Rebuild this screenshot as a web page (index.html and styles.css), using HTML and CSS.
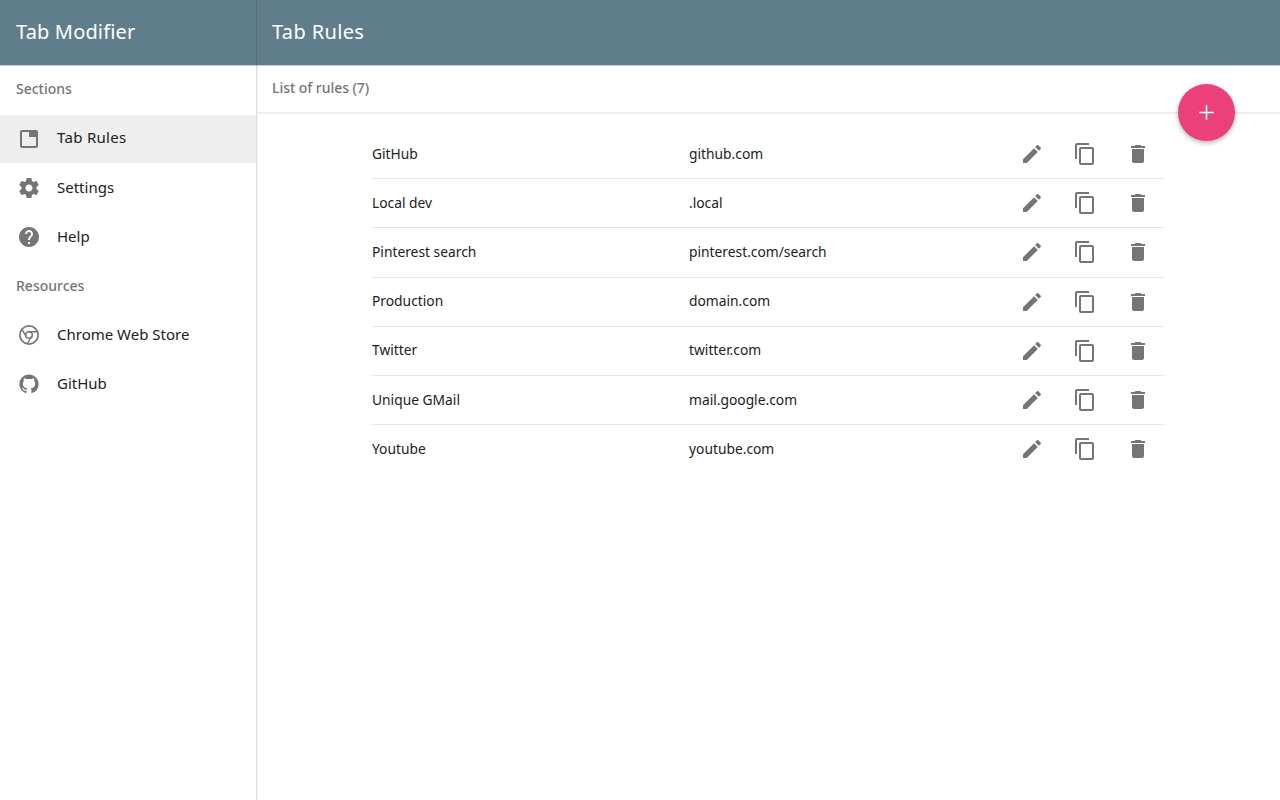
FILE: index.html
```html
<!DOCTYPE html>
<html lang="en">
<head>
  <meta charset="UTF-8" />
  <title>Tab Modifier</title>
  <link rel="stylesheet" href="styles.css">
</head>
<body>
  <aside class="sidenav">
    <div class="brand">Tab Modifier</div>
    <div class="nav-heading first">Sections</div>
    <a class="nav-item active">
      <svg class="nav-icon" viewBox="0 0 24 24"><path d="M19 3H5c-1.100 0-2 .9-2 2v14c0 1.100.9 2 2 2h14c1.100 0 2-.9 2-2V5c0-1.100-.9-2-2-2zm0 16H5V5h7v5h7v9z"/></svg>
      <span class="nav-label">Tab Rules</span>
    </a>
    <a class="nav-item">
      <svg class="nav-icon" viewBox="0 0 24 24"><path d="M19.43 12.98c.04-.32.07-.64.07-.98s-.03-.66-.07-.98l2.110-1.650c.19-.15.240-.42.120-.64l-2-3.460c-.12-.22-.39-.3-.61-.22l-2.490 1c-.52-.4-1.080-.73-1.690-.98l-.38-2.650C14.460 2.180 14.250 2 14 2h-4c-.25 0-.46.18-.49.420l-.38 2.650c-.61.25-1.170.59-1.690.98l-2.490-1c-.23-.09-.49 0-.61.22l-2 3.460c-.13.22-.07.49.12.64l2.110 1.650c-.04.32-.07.650-.07.98s.03.66.07.98l-2.110 1.650c-.19.15-.24.42-.12.64l2 3.460c.12.22.39.3.61.22l2.490-1c.52.4 1.080.73 1.690.98l.38 2.650c.03.24.24.42.49.42h4c.25 0 .46-.18.49-.42l.38-2.650c.61-.25 1.170-.59 1.690-.98l2.490 1c.23.09.49 0 .61-.22l2-3.460c.12-.22.07-.49-.12-.64l-2.110-1.650zM12 15.500c-1.930 0-3.500-1.570-3.500-3.500s1.570-3.500 3.500-3.500 3.500 1.570 3.500 3.500-1.570 3.500-3.500 3.500z"/></svg>
      <span class="nav-label">Settings</span>
    </a>
    <a class="nav-item">
      <svg class="nav-icon" viewBox="0 0 24 24"><path d="M12 2C6.480 2 2 6.480 2 12s4.480 10 10 10 10-4.480 10-10S17.520 2 12 2zm1 17h-2v-2h2v2zm2.070-7.750l-.9.920C13.450 12.900 13 13.500 13 15h-2v-.5c0-1.100.45-2.100 1.170-2.830l1.240-1.260c.37-.36.59-.86.59-1.410 0-1.100-.9-2-2-2s-2 .9-2 2H8c0-2.210 1.790-4 4-4s4 1.790 4 4c0 .88-.36 1.680-.93 2.250z"/></svg>
      <span class="nav-label">Help</span>
    </a>
    <div class="nav-heading">Resources</div>
    <a class="nav-item">
      <svg class="nav-icon" viewBox="0 0 24 24"><path fill-rule="evenodd" d="M12 2a10 10 0 1 0 0 20 10 10 0 0 0 0-20zm0 1.700a8.300 8.300 0 1 1 0 16.600 8.300 8.300 0 0 1 0-16.600z"/><path fill-rule="evenodd" d="M12 8a4 4 0 1 0 0 8 4 4 0 0 0 0-8zm0 1.400a2.600 2.600 0 1 1 0 5.200 2.600 2.600 0 0 1 0-5.200z"/><path d="M12 8h8.500v1.400H12zM8.600 14l-4.200-7.300 1.200-.7 4.200 7.300zM15.400 13.300l-4.200 7.300-1.200-.7 4.200-7.300z"/></svg>
      <span class="nav-label">Chrome Web Store</span>
    </a>
    <a class="nav-item">
      <svg class="nav-icon" viewBox="-2 -2 20 20"><path d="M8 0C3.580 0 0 3.580 0 8c0 3.540 2.290 6.530 5.470 7.590.4.070.55-.17.55-.38 0-.19-.01-.82-.01-1.490-2.010.37-2.530-.49-2.690-.94-.09-.23-.48-.94-.82-1.130-.28-.15-.68-.52-.01-.53.63-.01 1.080.58 1.230.82.72 1.210 1.870.87 2.330.66.070-.52.28-.87.51-1.070-1.780-.2-3.640-.89-3.640-3.950 0-.87.31-1.590.82-2.150-.08-.2-.36-1.020.08-2.120 0 0 .67-.21 2.200.82.64-.18 1.320-.27 2-.27s1.360.09 2 .27c1.530-1.040 2.200-.82 2.200-.82.44 1.100.16 1.920.08 2.120.51.56.82 1.270.82 2.150 0 3.070-1.870 3.750-3.650 3.950.29.25.54.73.54 1.480 0 1.070-.01 1.930-.01 2.200 0 .21.15.46.55.38A8.010 8.010 0 0 0 16 8c0-4.420-3.580-8-8-8z"/></svg>
      <span class="nav-label">GitHub</span>
    </a>
  </aside>

  <main class="content">
    <header class="toolbar">Tab Rules</header>
    <div class="subbar">List of rules (7)</div>
    <button class="fab">
      <svg viewBox="0 0 24 24"><path d="M11.250 5h1.500v6.250H19v1.500h-6.250V19h-1.500v-6.250H5v-1.500h6.250z"/></svg>
    </button>
    <div class="rules">
      <div class="rule"><span class="rule-name">GitHub</span><span class="rule-url">github.com</span><div class="rule-actions"><svg class="act" viewBox="0 0 24 24"><use href="#i-edit"/></svg><svg class="act" viewBox="0 0 24 24"><use href="#i-copy"/></svg><svg class="act" viewBox="0 0 24 24"><use href="#i-trash"/></svg></div></div>
      <div class="rule"><span class="rule-name">Local dev</span><span class="rule-url">.local</span><div class="rule-actions"><svg class="act" viewBox="0 0 24 24"><use href="#i-edit"/></svg><svg class="act" viewBox="0 0 24 24"><use href="#i-copy"/></svg><svg class="act" viewBox="0 0 24 24"><use href="#i-trash"/></svg></div></div>
      <div class="rule"><span class="rule-name">Pinterest search</span><span class="rule-url">pinterest.com/search</span><div class="rule-actions"><svg class="act" viewBox="0 0 24 24"><use href="#i-edit"/></svg><svg class="act" viewBox="0 0 24 24"><use href="#i-copy"/></svg><svg class="act" viewBox="0 0 24 24"><use href="#i-trash"/></svg></div></div>
      <div class="rule"><span class="rule-name">Production</span><span class="rule-url">domain.com</span><div class="rule-actions"><svg class="act" viewBox="0 0 24 24"><use href="#i-edit"/></svg><svg class="act" viewBox="0 0 24 24"><use href="#i-copy"/></svg><svg class="act" viewBox="0 0 24 24"><use href="#i-trash"/></svg></div></div>
      <div class="rule"><span class="rule-name">Twitter</span><span class="rule-url">twitter.com</span><div class="rule-actions"><svg class="act" viewBox="0 0 24 24"><use href="#i-edit"/></svg><svg class="act" viewBox="0 0 24 24"><use href="#i-copy"/></svg><svg class="act" viewBox="0 0 24 24"><use href="#i-trash"/></svg></div></div>
      <div class="rule"><span class="rule-name">Unique GMail</span><span class="rule-url">mail.google.com</span><div class="rule-actions"><svg class="act" viewBox="0 0 24 24"><use href="#i-edit"/></svg><svg class="act" viewBox="0 0 24 24"><use href="#i-copy"/></svg><svg class="act" viewBox="0 0 24 24"><use href="#i-trash"/></svg></div></div>
      <div class="rule"><span class="rule-name">Youtube</span><span class="rule-url">youtube.com</span><div class="rule-actions"><svg class="act" viewBox="0 0 24 24"><use href="#i-edit"/></svg><svg class="act" viewBox="0 0 24 24"><use href="#i-copy"/></svg><svg class="act" viewBox="0 0 24 24"><use href="#i-trash"/></svg></div></div>
    </div>
  </main>

  <svg class="sprites">
    <symbol id="i-edit" viewBox="0 0 24 24"><path d="M3 17.250V21h3.750L17.810 9.940l-3.750-3.750L3 17.250zM20.710 7.040a1 1 0 0 0 0-1.410l-2.340-2.340a1 1 0 0 0-1.410 0l-1.830 1.830 3.750 3.750 1.830-1.830z"/></symbol>
    <symbol id="i-copy" viewBox="0 0 24 24"><path d="M16 1H4c-1.100 0-2 .9-2 2v14h2V3h12V1zm3 4H8c-1.100 0-2 .9-2 2v14c0 1.100.9 2 2 2h11c1.100 0 2-.9 2-2V7c0-1.100-.9-2-2-2zm0 16H8V7h11v14z"/></symbol>
    <symbol id="i-trash" viewBox="0 0 24 24"><path d="M6 19c0 1.100.9 2 2 2h8c1.100 0 2-.9 2-2V7H6v12zM19 4h-3.500l-1-1h-5l-1 1H5v2h14V4z"/></symbol>
  </svg>
</body>
</html>
```

FILE: styles.css
```css
body {
  margin: 0;
  height: 800px;
  display: flex;
  overflow: hidden;
  background: #fff;
  color: #212121;
  font-family: "Noto Sans", sans-serif;
  font-size: 14px;
}
.sprites {
  display: none;
}
.sidenav {
  width: 256px;
  flex-shrink: 0;
  box-shadow: 1px 0 0 #e0e0e0, 2px 0 0 #f0f0f0;
  position: relative;
  z-index: 1;
}
.brand {
  height: 65px;
  line-height: 63px;
  padding-left: 16px;
  background: #607d8b;
  color: #fff;
  font-size: 20px;
  letter-spacing: 0.15px;
  border-bottom: 1px solid #c5d0d5;
}
.nav-heading {
  height: 49px;
  line-height: 49px;
  padding-left: 16px;
  color: #757575;
  font-weight: 500;
  font-size: 14px;
}
.nav-heading.first {
  height: 49px;
  line-height: 45px;
}
.nav-item {
  height: 49px;
  display: flex;
  align-items: center;
  padding-left: 17px;
  font-size: 15px;
}
.nav-item.active {
  height: 48px;
  background: #eeeeee;
}
.nav-item.active .nav-label {
  padding-bottom: 4px;
  letter-spacing: 0.3px;
}
.nav-label {
  padding-bottom: 2px;
}
.nav-icon {
  width: 24px;
  height: 24px;
  margin-right: 16px;
  fill: #757575;
}
.content {
  flex: 1;
  position: relative;
}
.toolbar {
  height: 65px;
  line-height: 63px;
  padding-left: 15px;
  background: #607d8b;
  color: #fff;
  font-size: 20px;
  letter-spacing: 0.35px;
  border-left: 1px solid #56707d;
  border-bottom: 1px solid #c5d0d5;
  position: relative;
  z-index: 2;
}
.subbar {
  height: 46px;
  line-height: 44px;
  padding-left: 16px;
  color: #757575;
  font-size: 14px;
  font-weight: 500;
  letter-spacing: -0.05px;
  border-bottom: 2px solid #eeeeee;
}
.fab {
  position: absolute;
  top: 84px;
  right: 45px;
  width: 57px;
  height: 57px;
  padding: 16px;
  border: none;
  border-radius: 50%;
  background: #ec407a;
  box-shadow: 0 2px 5px rgba(0,0,0,0.3);
  z-index: 2;
}
.fab svg {
  display: block;
  width: 25px;
  height: 25px;
  fill: #fff;
}
.rules {
  width: 792px;
  margin: 16px 0 0 116px;
}
.rule {
  height: 48.2px;
  display: flex;
  align-items: center;
  border-bottom: 1px solid #e6e6e6;
  font-size: 13.8px;
}
.rule:last-child {
  border-bottom: none;
}
.rule-name {
  width: 317px;
  padding-bottom: 2px;
}
.rule-url {
  flex: 1;
  padding-bottom: 2px;
}
.rule-actions {
  display: flex;
  gap: 29px;
  margin-right: 14.5px;
}
.act {
  width: 24px;
  height: 24px;
  fill: #757575;
}
```
